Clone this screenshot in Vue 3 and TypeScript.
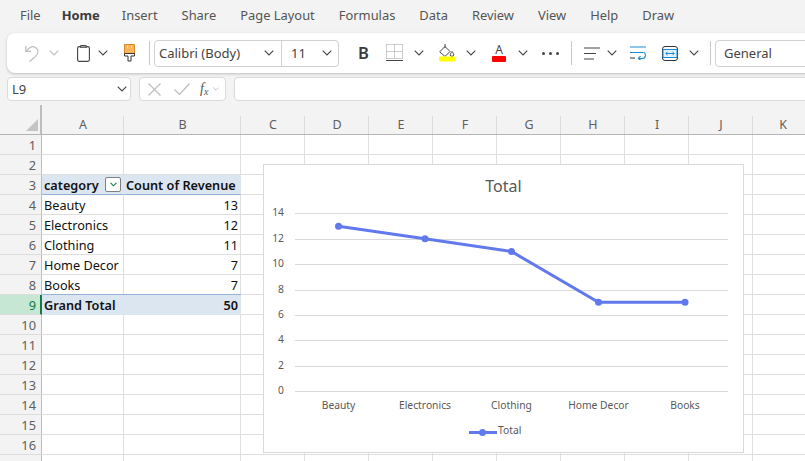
<script setup lang="ts">
const tabs = ['File', 'Home', 'Insert', 'Share', 'Page Layout', 'Formulas', 'Data', 'Review', 'View', 'Help', 'Draw']
const columns = ['A', 'B', 'C', 'D', 'E', 'F', 'G', 'H', 'I', 'J', 'K']

// rows that hold pivot data, the rest of the sheet is empty
const pivot: Record<number, [string, string]> = {
  3: ['category', 'Count of Revenue'],
  4: ['Beauty', '13'],
  5: ['Electronics', '12'],
  6: ['Clothing', '11'],
  7: ['Home Decor', '7'],
  8: ['Books', '7'],
  9: ['Grand Total', '50'],
}
const rowNumbers = Array.from({ length: 17 }, (_, i) => i + 1)
const emptyColumns = columns.slice(2)

const series = [
  { label: 'Beauty', value: 13, x: 338.5 },
  { label: 'Electronics', value: 12, x: 425 },
  { label: 'Clothing', value: 11, x: 511.5 },
  { label: 'Home Decor', value: 7, x: 598.5 },
  { label: 'Books', value: 7, x: 685 },
]
const ticks = [14, 12, 10, 8, 6, 4, 2, 0]
const yFor = (v: number) => 391 - v * 12.68
const linePoints = series.map((p) => `${p.x},${yFor(p.value)}`).join(' ')
</script>

<template>
  <div class="app">
    <nav class="tabs">
      <span v-for="tab in tabs" :key="tab" class="tab" :class="{ active: tab === 'Home' }">{{ tab }}</span>
    </nav>

    <div class="toolbar">
      <svg class="ic undo" width="14" height="17" viewBox="0 0 14 17" fill="none" stroke="#bdbdbd" stroke-width="1.2">
        <path d="M.8 1v5.4h5.4M1 6.2 5 2.6c3-2 7.8-.4 8 4 .1 2.5-1.4 4-3 5.4L4.5 16.5" />
      </svg>
      <svg class="chev faded ml10" viewBox="0 0 10 6"><path d="M.7.7 5 5 9.3.7" /></svg>
      <svg class="ic clip" width="13" height="17" viewBox="0 0 13 17" fill="none" stroke="#444" stroke-width="1.1">
        <rect x=".6" y="1.6" width="11.8" height="14.8" rx="1.6" />
        <path d="M3.5 1.6C3.5.8 4 .6 4.6.6h3.8c.6 0 1.1.2 1.1 1v.6h-6z" fill="#fff" />
      </svg>
      <svg class="chev ml8" viewBox="0 0 10 6"><path d="M.7.7 5 5 9.3.7" /></svg>
      <svg class="ic brush" width="11" height="18" viewBox="0 0 11 18">
        <path d="M.5.5h10v9H.5z" fill="#f7b659" stroke="#d8862a" />
        <path d="M3.5 1v3M7.5 1v3" stroke="#fbe0b5" />
        <path d="M.5 9.5h10v2.5H7v5H4v-5H.5z" fill="#fff" stroke="#333" />
      </svg>
      <i class="divider d1"></i>

      <div class="combo font">
        <span class="combo-part family">Calibri (Body)<svg class="chev" viewBox="0 0 10 6"><path d="M.7.7 5 5 9.3.7" /></svg></span>
        <span class="combo-part size">11<svg class="chev" viewBox="0 0 10 6"><path d="M.7.7 5 5 9.3.7" /></svg></span>
      </div>

      <span class="bold-btn">B</span>
      <svg class="ic borders" width="17" height="18" viewBox="0 0 17 18" fill="none">
        <path d="M.5.5h16v14H.5zM8.5.5v14M.5 7.5h16" stroke="#9a9a9a" stroke-dasharray="1 1" />
        <path d="M0 16.5h17" stroke="#444" />
      </svg>
      <svg class="chev ml11" viewBox="0 0 10 6"><path d="M.7.7 5 5 9.3.7" /></svg>
      <svg class="ic fill" width="16" height="18" viewBox="0 0 16 18" fill="none">
        <path d="M1 7.5 6 2.5l5 5-4.5 4.5a1 1 0 0 1-1 0L1 8.2z" stroke="#444" />
        <path d="M6 0v4" stroke="#444" />
        <path d="M13 7.5c1 1.4 1.7 2.2 1.7 3.2a1.7 1.7 0 0 1-3.4 0c0-1 .7-1.8 1.7-3.2z" stroke="#444" />
        <rect y="12.5" width="16" height="5" rx="1" fill="#ffff00" />
      </svg>
      <svg class="chev ml11" viewBox="0 0 10 6"><path d="M.7.7 5 5 9.3.7" /></svg>
      <div class="font-color"><span>A</span><i></i></div>
      <svg class="chev ml12" viewBox="0 0 10 6"><path d="M.7.7 5 5 9.3.7" /></svg>
      <div class="dots"><i></i><i></i><i></i></div>
      <i class="divider d2"></i>
      <svg class="ic align" width="16" height="13" viewBox="0 0 16 13" stroke="#444" stroke-width="1.1">
        <path d="M0 1h16M0 6.500h12M0 12h10" />
      </svg>
      <svg class="chev ml7" viewBox="0 0 10 6"><path d="M.7.7 5 5 9.3.7" /></svg>
      <svg class="ic wrap" width="16" height="14" viewBox="0 0 16 14" fill="none" stroke-width="1.1">
        <path d="M0 1h16M0 6.500h13.500" stroke="#1f8ad2" />
        <path d="M0 12h5" stroke="#444" />
        <path d="M13.500 6.500c2.700 0 2.700 6 -1 6H8.500M10.500 10.200 8.300 12.500l2.200 1.500" stroke="#1f8ad2" />
      </svg>
      <svg class="ic merge" width="16" height="15" viewBox="0 0 16 15" fill="none">
        <rect x=".5" y=".5" width="15" height="14" rx="2.500" stroke="#333" />
        <rect x="1" y="3.500" width="14" height="8" fill="#e3f2fb" stroke="#1f8ad2" />
        <path d="M4 7.500h8M5.500 5.800 3.800 7.500l1.700 1.700M10.500 5.800 12.200 7.500l-1.700 1.700" stroke="#1f8ad2" />
      </svg>
      <svg class="chev ml11" viewBox="0 0 10 6"><path d="M.7.7 5 5 9.3.7" /></svg>
      <i class="divider d3"></i>
      <div class="combo general">General</div>
    </div>

    <div class="formula-row">
      <div class="box name-box">L9<svg class="chev" viewBox="0 0 10 6"><path d="M.7.7 5 5 9.3.7" /></svg></div>
      <div class="box fx-box">
        <svg width="13" height="13" viewBox="0 0 13 13" stroke="#bdbdbd" stroke-width="1.2"><path d="M.5.5l12 12M12.500.5l-12 12" /></svg>
        <svg class="check" width="16" height="12" viewBox="0 0 16 12" fill="none" stroke="#bdbdbd" stroke-width="1.2"><path d="M.5 6.500 5.500 11.500 15.500.5" /></svg>
        <span class="fx">f<span class="fx-sub">x</span></span>
        <svg class="chev tiny" viewBox="0 0 10 6"><path d="M.7.7 5 5 9.3.7" /></svg>
      </div>
      <div class="box formula-box"></div>
    </div>

    <div class="sheet">
      <div class="row header-row">
        <div class="corner"><i></i></div>
        <div v-for="col in columns" :key="col" class="col-head" :class="'col-' + col">{{ col }}</div>
      </div>
      <div
        v-for="n in rowNumbers"
        :key="n"
        class="row"
        :class="{ 'pivot-head': n === 3, 'pivot-total': n === 9 }"
      >
        <div class="row-head" :class="{ selected: n === 9 }">{{ n }}</div>
        <div class="cell col-A">
          {{ pivot[n]?.[0] }}
          <span v-if="n === 3" class="filter-btn">
            <svg width="7" height="5" viewBox="0 0 7 5" fill="none" stroke="#107c41" stroke-width="1.100"><path d="M.6.8 3.500 3.800 6.400.8" /></svg>
          </span>
        </div>
        <div class="cell col-B" :class="{ num: n !== 3 }">{{ pivot[n]?.[1] }}</div>
        <div v-for="col in emptyColumns" :key="col" class="cell" :class="'col-' + col"></div>
      </div>

      <div class="chart">
        <svg width="479" height="287" viewBox="264 165 479 287">
          <text x="503.500" y="192" class="chart-title" text-anchor="middle">Total</text>
          <g v-for="t in ticks" :key="t">
            <line x1="295" x2="728" :y1="Math.round(yFor(t)) + 0.5" :y2="Math.round(yFor(t)) + 0.5" stroke="#d9d9d9" />
            <text x="284" :y="yFor(t) + 3" class="chart-label" text-anchor="end">{{ t }}</text>
          </g>
          <polyline :points="linePoints" fill="none" stroke="#6179ec" stroke-width="3" />
          <circle v-for="p in series" :key="p.label" :cx="p.x" :cy="yFor(p.value)" r="3.500" fill="#6179ec" />
          <text v-for="p in series" :key="p.label" :x="p.x" y="409" class="chart-label" text-anchor="middle">{{ p.label }}</text>
          <line x1="469" x2="497" y1="432.500" y2="432.500" stroke="#6179ec" stroke-width="3" />
          <circle cx="482.500" cy="432.500" r="3.500" fill="#6179ec" />
          <text x="498" y="433.500" class="chart-label">Total</text>
        </svg>
      </div>
    </div>
  </div>
</template>

<style>
html,
body {
  margin: 0;
  background: #f3f3f3;
}
</style>

<style scoped>
.app {
  width: 805px;
  height: 461px;
  overflow: hidden;
  background: #f3f3f3;
  font-family: 'Noto Sans', 'Open Sans', sans-serif;
  color: #444;
}

.tabs {
  display: flex;
  gap: 24px;
  height: 33px;
  padding-left: 20px;
  align-items: center;
  font-size: 12.900px;
  color: #555;
  box-sizing: border-box;
  padding-bottom: 4px;
}

.tab:first-child {
  margin-right: -3px;
}

.tab.active {
  margin-right: -2px;
  font-weight: 700;
  color: #3b3b3b;
}

.toolbar {
  display: flex;
  align-items: center;
  width: 860px;
  height: 40px;
  margin-left: 7px;
  padding-left: 18px;
  box-sizing: border-box;
  background: #fff;
  border-radius: 8px;
  box-shadow: 0 1px 3px rgba(0, 0, 0, 0.22);
}

.ic {
  flex: none;
}

.chev {
  flex: none;
  width: 10px;
  height: 6px;
  fill: none;
  stroke: #444;
  stroke-width: 1.100;
}

.chev.faded {
  stroke: #bdbdbd;
}

.ml7 { margin-left: 7px; }
.ml8 { margin-left: 8px; }
.ml10 { margin-left: 10px; }
.ml11 { margin-left: 11px; }
.ml12 { margin-left: 12px; }

.clip { margin-left: 18px; }
.brush { margin-left: 16px; }

.divider {
  flex: none;
  width: 1px;
  height: 24px;
  background: #c8c8c8;
}

.d1 { margin-left: 14px; }
.d2 { margin-left: 12px; }
.d3 { margin-left: 11px; }

.combo {
  flex: none;
  height: 27px;
  box-sizing: border-box;
  display: flex;
  align-items: center;
  border: 1px solid #d1d1d1;
  border-radius: 4px;
  font-size: 13px;
  color: #444;
}

.font {
  width: 185px;
  margin-left: 4px;
}

.combo-part {
  display: flex;
  align-items: center;
  justify-content: space-between;
  height: 100%;
  box-sizing: border-box;
}

.family {
  width: 127px;
  padding: 0 7px 0 4px;
  border-right: 1px solid #d1d1d1;
}

.size {
  width: 56px;
  padding: 0 6px 0 9px;
}

.bold-btn {
  flex: none;
  width: 12px;
  margin-left: 19px;
  font-size: 16.500px;
  font-weight: 600;
  line-height: 1;
  color: #3b3b3b;
}

.borders { margin-left: 16px; }
.fill { margin-left: 15px; }

.font-color {
  flex: none;
  width: 14px;
  margin-left: 16px;
  display: flex;
  flex-direction: column;
  align-items: center;
  font-size: 12px;
  line-height: 12px;
  color: #444;
}

.font-color i {
  width: 14px;
  height: 6px;
  border-radius: 1px;
  background: #f00;
}

.dots {
  flex: none;
  display: flex;
  gap: 4px;
  margin-left: 14px;
}

.dots i {
  width: 3px;
  height: 3px;
  border-radius: 50%;
  background: #444;
}

.align { margin-left: 12px; }
.wrap { margin-left: 13px; }
.merge { margin-left: 16px; }

.general {
  width: 120px;
  margin-left: 4px;
  padding-left: 8px;
}

.formula-row {
  display: flex;
  gap: 8px;
  margin: 4px 0 0 7px;
  height: 24px;
}

.box {
  flex: none;
  box-sizing: border-box;
  height: 24px;
  background: #fff;
  border: 1px solid #dadada;
  border-radius: 4px;
  display: flex;
  align-items: center;
}

.name-box {
  width: 124px;
  padding: 0 3px 0 4px;
  justify-content: space-between;
  font-size: 13px;
}

.fx-box {
  width: 87px;
  padding-left: 8px;
}

.check {
  margin-left: 13px;
}

.fx {
  margin-left: 10px;
  font-family: 'Liberation Serif', serif;
  font-style: italic;
  font-size: 14px;
  color: #555;
}

.fx-sub {
  font-size: 10px;
  position: relative;
  top: 2px;
}

.chev.tiny {
  width: 6px;
  height: 4px;
  margin-left: 5px;
  stroke: #999;
}

.formula-box {
  width: 600px;
}

.sheet {
  position: relative;
  margin-top: 4px;
}

.row {
  display: flex;
  height: 20px;
}

.header-row {
  height: 30px;
}

.corner {
  position: relative;
  flex: none;
  width: 42px;
  box-sizing: border-box;
  border-right: 2px solid #bdbdbd;
  border-bottom: 1px solid #b5b5b5;
}

.corner i {
  position: absolute;
  right: 2px;
  bottom: 3px;
  width: 12px;
  height: 12px;
  background: #c4c4c4;
  clip-path: polygon(100% 0, 100% 100%, 0 100%);
}

.col-head {
  flex: none;
  box-sizing: border-box;
  height: 30px;
  padding-top: 11px;
  text-align: center;
  font-size: 12.500px;
  line-height: 18px;
  color: #5f5f5f;
  border-bottom: 1px solid #b5b5b5;
  background: linear-gradient(to bottom, transparent 11px, #dcdcdc 11px) no-repeat right / 1px 100%;
}

.col-A { width: 82px; }
.col-B { width: 117px; }
.col-C, .col-D, .col-E, .col-F, .col-G, .col-H, .col-I, .col-J { width: 64px; }
.col-K { width: 60px; }

.row-head {
  flex: none;
  width: 42px;
  box-sizing: border-box;
  padding-right: 5px;
  text-align: right;
  font-size: 12.800px;
  line-height: 21px;
  color: #5f5f5f;
  border-right: 1px solid #bdbdbd;
  border-bottom: 1px solid #dcdcdc;
}

.row-head.selected {
  background: #c6e7d3;
  color: #107c41;
  border-right: 2px solid #107c41;
  padding-right: 4px;
}

.cell {
  position: relative;
  flex: none;
  box-sizing: border-box;
  padding: 0 2px;
  background: #fff;
  font-size: 12.700px;
  line-height: 21px;
  color: #111;
  white-space: nowrap;
  border-right: 1px solid #dfdfdf;
  border-bottom: 1px solid #dfdfdf;
}

.cell.num {
  text-align: right;
}

.pivot-head .col-A,
.pivot-head .col-B,
.pivot-total .col-A,
.pivot-total .col-B {
  background: #dce6f1;
  font-weight: 600;
  border-right-color: #dce6f1;
}

.pivot-head .col-A,
.pivot-head .col-B {
  border-bottom-color: #95b3d7;
}

.pivot-total .col-A,
.pivot-total .col-B {
  border-bottom-color: #dce6f1;
  box-shadow: 0 -1px 0 #95b3d7;
}

.filter-btn {
  position: absolute;
  left: 63px;
  top: 2px;
  width: 16px;
  height: 15px;
  box-sizing: border-box;
  display: flex;
  align-items: center;
  justify-content: center;
  background: #fff;
  border: 1px solid #7f7f7f;
  border-radius: 2px;
}

.chart {
  position: absolute;
  left: 263px;
  top: 59px;
  width: 481px;
  height: 289px;
  box-sizing: border-box;
  background: #fff;
  border: 1px solid #d9d9d9;
}

.chart svg {
  display: block;
}

.chart-title {
  font-size: 16px;
  fill: #595959;
}

.chart-label {
  font-size: 10.300px;
  fill: #595959;
}
</style>
